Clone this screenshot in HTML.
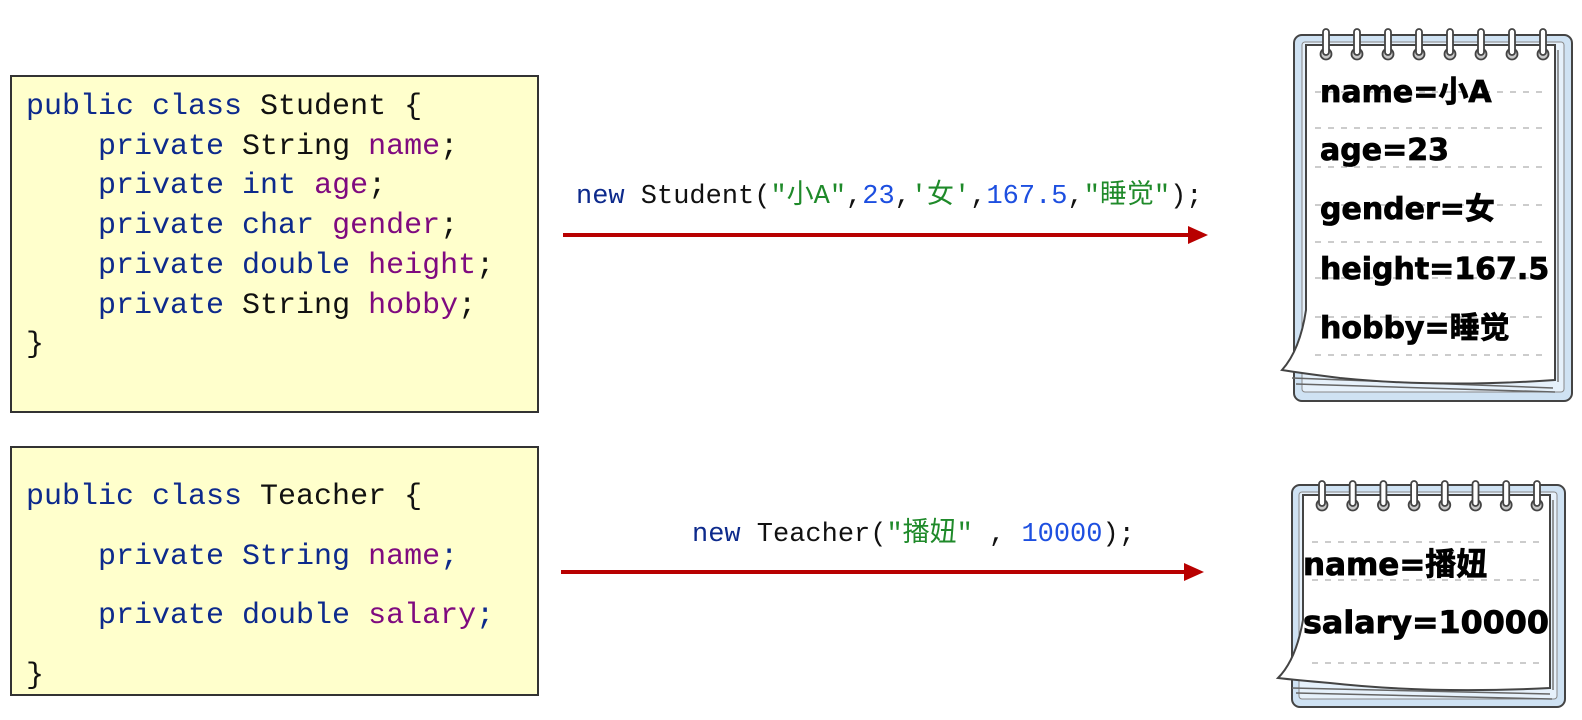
<!DOCTYPE html>
<html><head><meta charset="utf-8"><style>
body{margin:0;width:1582px;height:720px;background:#fff;position:relative;overflow:hidden}
.box{position:absolute;background:#ffffcc;border:2px solid #333;box-sizing:border-box}
.code{position:absolute;margin:0;font-family:"Liberation Mono","Noto Sans CJK SC",monospace;font-size:30px;white-space:pre;color:#111}
.k{color:#0d2a8c}.v{color:#7f0a7f}.s{color:#1f8a2a}.n{color:#1d4fe0}
.call{position:absolute;font-family:"Liberation Mono","Noto Sans CJK SC",monospace;font-size:27px;white-space:pre;color:#111}
</style></head><body>
<div class="box" style="left:10px;top:75px;width:529px;height:338px"></div>
<div class="code" style="left:26px;top:88px;line-height:39.7px"><span class="k">public class</span> Student {
    <span class="k">private</span> String <span class="v">name</span>;
    <span class="k">private int</span> <span class="v">age</span>;
    <span class="k">private char</span> <span class="v">gender</span>;
    <span class="k">private double</span> <span class="v">height</span>;
    <span class="k">private</span> String <span class="v">hobby</span>;
}</div>
<div class="box" style="left:10px;top:446px;width:529px;height:250px"></div>
<div class="code" style="left:26px;top:468px;line-height:59.5px"><span class="k">public class</span> Teacher {
    <span class="k">private String</span> <span class="v">name</span><span class="k">;</span>
    <span class="k">private double</span> <span class="v">salary</span><span class="k">;</span>
}</div>

<div class="call" style="left:576px;top:172px"><span class="k">new</span> Student(<span class="s">"小A"</span>,<span class="n">23</span>,<span class="s">'女'</span>,<span class="n">167.5</span>,<span class="s">"睡觉"</span>);</div>
<div class="call" style="left:692px;top:510px"><span class="k">new</span> Teacher(<span class="s">"播妞"</span> , <span class="n">10000</span>);</div>

<svg width="1582" height="720" style="position:absolute;left:0;top:0">
<g fill="#b80000">
<rect x="563" y="233" width="630" height="4"/><polygon points="1188,226 1208,235 1188,244"/>
<rect x="561" y="570" width="628" height="4"/><polygon points="1184,563 1204,572 1184,581"/>
</g>
<g stroke="#444" stroke-width="2">
<rect x="1294" y="35" width="278" height="366" rx="8" fill="#cfe2f3"/>
<rect x="1302" y="42" width="262" height="350" rx="3" fill="#e6f1fb" stroke="#888" stroke-width="1"/>
<path d="M1292,378 L1553,388 M1296,384 L1555,392" fill="none" stroke="#666" stroke-width="1.5"/>
<path d="M1306,45 H1555 V380 Q1440,388 1340,378 Q1300,373 1282,370 Q1300,350 1306,310 Z" fill="#fff"/>
<line x1="1558" y1="50" x2="1558" y2="382" stroke="#777" stroke-width="1.5"/>
</g>
<g stroke="#bbb" stroke-width="1.5" stroke-dasharray="6 7">
<line x1="1315" y1="92" x2="1545" y2="92"/><line x1="1315" y1="128" x2="1545" y2="128"/>
<line x1="1315" y1="167" x2="1545" y2="167"/><line x1="1315" y1="205" x2="1545" y2="205"/>
<line x1="1315" y1="242" x2="1545" y2="242"/><line x1="1315" y1="278" x2="1545" y2="278"/>
<line x1="1315" y1="317" x2="1545" y2="317"/><line x1="1315" y1="355" x2="1545" y2="355"/>
</g>
<g font-family="DejaVu Sans,'Noto Sans CJK SC',sans-serif" font-weight="bold" font-size="30" fill="#000" stroke="#000" stroke-width="0.8">
<text x="1320" y="102">name=小A</text>
<text x="1320" y="160">age=23</text>
<text x="1320" y="219">gender=女</text>
<text x="1320" y="279">height=167.5</text>
<text x="1320" y="338">hobby=睡觉</text>
</g>
<g stroke="#444" stroke-width="1.8">
<g id="r1"><circle cx="1326" cy="54" r="5.5" fill="#c8c8c8"/><rect x="1323" y="29" width="6" height="26" rx="3" fill="#fff"/></g>
<use href="#r1" x="31"/><use href="#r1" x="62"/><use href="#r1" x="93"/><use href="#r1" x="124"/><use href="#r1" x="155"/><use href="#r1" x="186"/><use href="#r1" x="217"/>
</g>
<g stroke="#444" stroke-width="2">
<rect x="1292" y="485" width="273" height="222" rx="8" fill="#cfe2f3"/>
<rect x="1299" y="492" width="258" height="207" rx="3" fill="#e6f1fb" stroke="#888" stroke-width="1"/>
<path d="M1292,688 L1550,694 M1296,693 L1552,699" fill="none" stroke="#666" stroke-width="1.5"/>
<path d="M1303,495 H1550 V688 Q1430,694 1330,683 Q1295,680 1278,678 Q1296,660 1303,620 Z" fill="#fff"/>
<line x1="1553" y1="500" x2="1553" y2="690" stroke="#777" stroke-width="1.5"/>
</g>
<g stroke="#bbb" stroke-width="1.5" stroke-dasharray="6 7">
<line x1="1312" y1="542" x2="1540" y2="542"/><line x1="1312" y1="580" x2="1540" y2="580"/><line x1="1312" y1="663" x2="1540" y2="663"/>
</g>
<g font-family="DejaVu Sans,'Noto Sans CJK SC',sans-serif" font-weight="bold" font-size="31" fill="#000" stroke="#000" stroke-width="0.8">
<text x="1303" y="575">name=播妞</text>
<text x="1303" y="633" textLength="246" lengthAdjust="spacingAndGlyphs">salary=10000</text>
</g>
<g stroke="#444" stroke-width="1.8">
<g id="r2"><circle cx="1322" cy="505" r="5.5" fill="#c8c8c8"/><rect x="1319" y="481" width="6" height="25" rx="3" fill="#fff"/></g>
<use href="#r2" x="30.7"/><use href="#r2" x="61.4"/><use href="#r2" x="92.1"/><use href="#r2" x="122.8"/><use href="#r2" x="153.5"/><use href="#r2" x="184.2"/><use href="#r2" x="215"/>
</g>
</svg>
</body></html>
